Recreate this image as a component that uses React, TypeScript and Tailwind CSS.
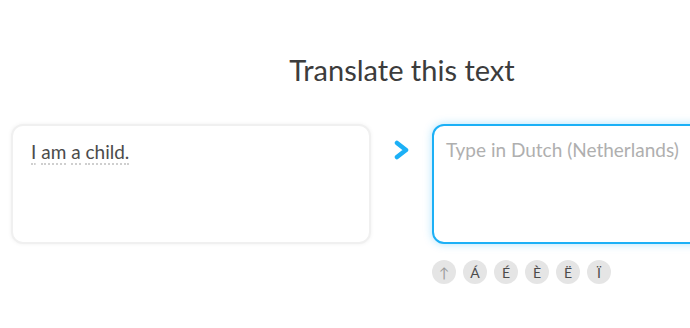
const specialChars = ['↑', 'Á', 'É', 'È', 'Ë', 'Ï'];
const sentence = ['I', 'am', 'a', 'child.'];

const App = () => {
  return (
    <div className="h-[328px] w-[690px] overflow-hidden bg-white font-['Lato','Noto_Sans',sans-serif]">
      <div className="w-[781px] pl-[11px] pt-[50px]">
        <h1 className="pl-[12px] text-center text-[29px] leading-[40px] text-[#3c3c3c]">Translate this text</h1>

        <div className="mt-[34px] flex items-start">
          <div className="h-[120px] w-[360px] shrink-0 rounded-[12px] border-2 border-[#f0f0f0] bg-white px-[18px] py-[13px] shadow-[0_0_4px_rgba(0,0,0,0.06)]">
            <p className="text-[19px] leading-[26px] text-[#4b4b4b]">
              {sentence.map((w, i) => (
                <span key={i}>
                  <span className="border-b-2 border-dotted border-[#cfcfcf]">{w}</span>
                  {i < sentence.length - 1 ? ' ' : ''}
                </span>
              ))}
            </p>
          </div>

          <div className="flex w-[61px] shrink-0 justify-center pt-[16px]">
            <svg width="18" height="20" viewBox="0 0 18 20" fill="none">
              <polyline
                points="4,3 13,10 4,17"
                stroke="#1cb0f6"
                strokeWidth="4.5"
                strokeLinecap="round"
                strokeLinejoin="round"
              />
            </svg>
          </div>

          <div className="flex w-[360px] shrink-0 flex-col">
            <textarea
              className="h-[120px] w-full resize-none rounded-[12px] border-2 border-[#1cb0f6] bg-white px-[12px] py-[11px] text-[19px] leading-[26px] text-[#4b4b4b] shadow-[0_0_8px_rgba(28,176,246,0.35)] outline-none placeholder:text-[#afafaf]"
              placeholder="Type in Dutch (Netherlands)"
            />
            <div className="mt-[16px] flex gap-[7px]">
              {specialChars.map((c, i) => (
                <button
                  key={c}
                  className={`flex h-[24px] w-[24px] items-center justify-center rounded-full bg-[#e5e5e5] text-[14px] ${
                    i === 0 ? 'text-[#9a9a9a]' : 'text-[#4b4b4b]'
                  }`}
                >
                  {c}
                </button>
              ))}
            </div>
          </div>
        </div>
      </div>
    </div>
  );
};

export default App;
